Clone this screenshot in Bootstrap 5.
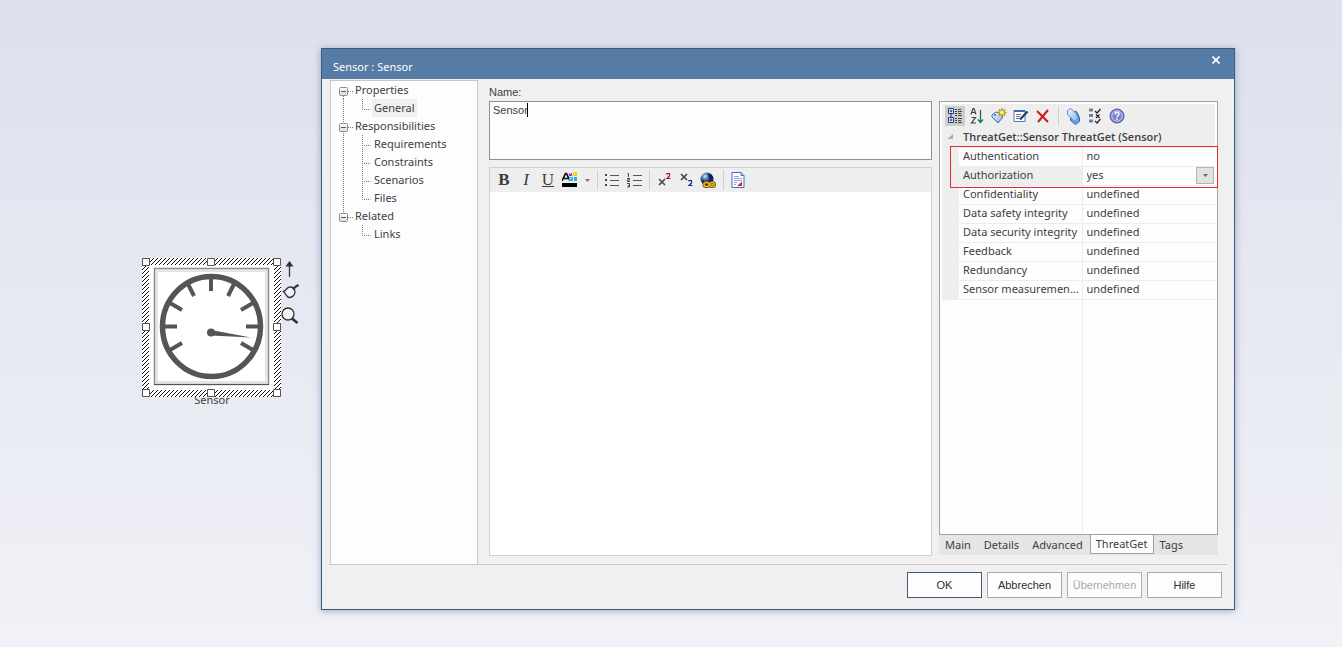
<!DOCTYPE html>
<html lang="de">
<head>
<meta charset="utf-8">
<meta name="viewport" content="width=device-width, initial-scale=1">
<title>Sensor : Sensor</title>
<link href="https://cdn.jsdelivr.net/npm/bootstrap@5.3.0/dist/css/bootstrap.min.css" rel="stylesheet">
<style>
body{min-height:100vh;padding:48px 107px 37px 142px;background:linear-gradient(#dde0ed,#f1f2f7);font:11px/18px "Noto Sans","Open Sans",sans-serif;color:#404040}
button,textarea,select{font:inherit;color:inherit}
svg{display:block;flex:none}
/* diagram element */
.element{width:179px;padding-top:210px;flex:none}
.element-name{width:140px;margin-top:-5px;line-height:16px;text-align:center}
.element svg{position:relative}
.quick{gap:6px;padding-top:3px}
/* dialog */
.dialog{border:1px solid #3c5a7f;background:#f0f0f0;box-shadow:0 1px 7px rgba(70,100,150,.5);min-width:0}
.titlebar{background:#567ca6;color:#fff;height:30px;padding:9px 10px 0 11px}
.close-x{width:16px;height:16px;margin-top:-6px}
.plain{border:0;background:none;padding:0}
.main{margin:0 7px;border-bottom:1px solid #c8c8c8;padding:1px 9px 0 0}
.tree{width:148px;margin-left:1px;margin-right:11px;border:1px solid #c8c8c8;border-bottom:0;background:#fdfdfd;flex:none}
.tree a{color:inherit;text-decoration:none;white-space:nowrap}
.tree .sub{padding:0 2px}
.tree .active{background:#f0f0f0}
.middle{margin-right:7px;min-width:0;padding:3px 0 8px}
.field-name{font-family:"Liberation Sans",Arial,sans-serif}
.name-box{height:59px;border:1px solid #909090;background:#fdfdfd;padding:0 3px;resize:none;border-radius:0;line-height:16px}
.caret{position:absolute;left:38px;top:2px;width:1px;height:14px;background:#000}
.editor{border:1px solid #d0d0d0;margin-top:7px}
.bar{background:#eeeeee;gap:2px}
.editor .bar{height:24px;padding:0 4px}
.tool{width:20px;height:20px;display:flex;align-items:center;justify-content:center}
.tool.slim{width:10px}
.tool.on{background:#cdcdcd}
.glyph{font:17px/20px "Liberation Serif",serif;color:#3c3c3c}
.sep{width:1px;height:20px;background:#d0d0d0;margin:0 2px 0 3px}
.writing{border:0;resize:none;background:#fff;outline:0}
/* property grid */
.side{width:279px;flex:none;padding:21px 0 9px}
.pane{border:1px solid #a0a0a0;background:#fdfdfd;padding:2px}
.pane .bar{height:24px;padding:0 3px}
.props{width:100%;table-layout:fixed;line-height:16px}
.props th,.props td{height:19px;padding:0 4px;border-bottom:1px solid #ececec;white-space:nowrap;font-weight:400;vertical-align:top}
.props tbody th{padding-right:0}
.props thead th{background:#eeeeee;font-family:"Open Sans","Noto Sans",sans-serif;font-weight:600;line-height:18px;border-color:#eeeeee}
.props th.gut,.props td.gut{width:17px;padding:0;background:#eeeeee;border-color:#eeeeee;vertical-align:middle}
.props td:last-child{border-left:1px solid #ececec}
.props .sel th{background:#eeeeee}
.props select{appearance:none;border:0;background:none;padding:0;outline:0;height:16px}
.drop{width:18px;height:17px;border:1px solid #b4b4b4;background:#e2e2e2;margin-right:-3px;padding:0}
.rest{margin-left:140px;border-left:1px solid #ececec}
.marker{position:absolute;left:10px;right:-1px;top:44px;height:42px;border:1px solid #e02a35;pointer-events:none}
.tabs{background:#e5e5e5;height:20px}
.tabs button{padding:0 7px 0 6px;line-height:19px;height:19px}
.tabs button.cur{background:#fdfdfd;border:1px solid #a0a0a0;border-top:0;margin-top:-1px;height:20px;padding:0 5px}
.foot{padding:7px 12px 11px;gap:5px}
.cmd{width:75px;height:26px;border:1px solid #a8a8a8;border-radius:0;background:#fdfdfd;padding:0;font:11px/18px "Liberation Sans",Arial,sans-serif;color:#303030}
.cmd.main-cmd{border-color:#3c5a7f}
.cmd:disabled{color:#aaa;border-color:#b0b0b0;opacity:1;background:#fdfdfd}
</style>
<script src="https://cdn.jsdelivr.net/npm/bootstrap@5.3.0/dist/js/bootstrap.bundle.min.js"></script>
</head>
<body class="d-flex">
<svg width="0" height="0" class="position-absolute" aria-hidden="true">
  <defs>
    <linearGradient id="box" x2="0" y2="1"><stop stop-color="#fff"/><stop offset="1" stop-color="#ddd"/></linearGradient>
    <linearGradient id="blue" x2="1" y2="1"><stop stop-color="#f4f9ff"/><stop offset="1" stop-color="#7fb0ea"/></linearGradient>
    <radialGradient id="globe" cx=".35" cy=".3"><stop stop-color="#d4e6ee"/><stop offset=".5" stop-color="#4d7c9c"/><stop offset="1" stop-color="#0a1c6c"/></radialGradient>
    <pattern id="hatch" width="4" height="4" patternUnits="userSpaceOnUse"><rect width="4" height="4" fill="#fff"/><path d="M0 3h1v1H0zM1 2h1v1H1zM2 1h1v1H2zM3 0h1v1H3z" fill="#111"/></pattern>
    <g id="node"><path d="M17 10.5h5" stroke="#777" stroke-dasharray="1 1"/><rect x="8.5" y="6.5" width="8" height="8" rx="1" fill="url(#box)" stroke="#8c8c8c"/><path d="M10 10.5h5" stroke="#3b5ba5"/></g>
    <path id="elbow" d="M31.500 0v10.500h8" fill="none" stroke="#777" stroke-dasharray="1 1"/>
    <path id="spine" d="M31.500 0v18" stroke="#777" stroke-dasharray="1 1"/>
    <path id="trunk" d="M12.500 0v18" stroke="#777" stroke-dasharray="1 1"/>
  </defs>
</svg>

<section class="element" aria-label="Sensor">
  <div class="d-flex">
    <svg width="139" height="139" viewBox="0 0 139 139">
      <rect width="139" height="139" fill="url(#hatch)"/><rect x="7" y="7" width="125" height="125" fill="#fff"/>
      <rect x="12.500" y="10.500" width="114" height="116" fill="#f2f2f2" stroke="#8d8d8d" stroke-width="1.500"/>
      <rect x="15" y="13" width="109" height="111" fill="#fff" stroke="#e4e4e4" stroke-width="2"/>
      <path d="M12 126.500h115" stroke="#555"/>
      <ellipse cx="69.500" cy="68.500" rx="49" ry="50" fill="none" stroke="#555" stroke-width="5.500"/>
      <path stroke="#555" stroke-width="4" d="M69 20v13M23 68.500h12M104 68.500h12M46 26l6 12M92 26l-6 12M28 45l12 7M111 45l-12 7M28 92l12-7M111 92l-12-7"/>
      <circle cx="69" cy="74.500" r="4" fill="#555"/><path fill="#555" d="M69 72l40 7.500-40-2z"/>
      <g fill="#fff" stroke="#555"><path d="M.5.5h7v7h-7zM65.500.5h7v7h-7zM131.500.5h7v7h-7zM.5 65.500h7v7h-7zM131.500 65.500h7v7h-7zM.5 131.500h7v7h-7zM65.500 131.500h7v7h-7zM131.500 131.500h7v7h-7z"/></g>
    </svg>
    <div class="d-flex flex-column quick">
      <svg width="18" height="17"><path d="M8.500 3v13" stroke="#333" stroke-width="1.300"/><path d="M8.500 0l4 5.500h-8z" fill="#333"/></svg>
      <svg width="18" height="16"><path d="M2.500 7.500c2.500-.5 3-4.500 6.500-4.500 3 0 5 2 5 4.500 0 3.500-2.500 6-5.500 6-3 0-3-3.500-6-6z" fill="#f1f1f3" stroke="#333" stroke-width="1.300"/><path d="M12 5.500l2-2.500L17.500 1" fill="none" stroke="#333" stroke-width="2.200"/></svg>
      <svg width="18" height="19"><circle cx="7" cy="8" r="6" fill="#f3f3f5" stroke="#333" stroke-width="1.300"/><path d="M11 12.500l5.500 4.500" stroke="#333" stroke-width="2.600"/></svg>
    </div>
  </div>
  <div class="element-name">Sensor</div>
</section>

<main class="dialog d-flex flex-column flex-grow-1">
  <header class="titlebar d-flex justify-content-between">
    <span>Sensor : Sensor</span>
    <button class="plain close-x d-flex align-items-center justify-content-center" aria-label="Schließen"><svg width="8" height="8"><path d="M.5.5l7 7M7.500.5l-7 7" stroke="#fff" stroke-width="1.600"/></svg></button>
  </header>
  <div class="main d-flex flex-grow-1">
    <nav class="tree">
      <div class="d-flex"><svg width="24" height="18"><path d="M12.500 15v3" stroke="#777" stroke-dasharray="1 1"/><use href="#node"/></svg><a href="#">Properties</a></div>
      <div class="d-flex"><svg width="41" height="18"><use href="#trunk"/><use href="#elbow"/></svg><a href="#" class="sub active">General</a></div>
      <div class="d-flex"><svg width="24" height="18"><use href="#trunk"/><use href="#node"/></svg><a href="#">Responsibilities</a></div>
      <div class="d-flex"><svg width="41" height="18"><use href="#trunk"/><use href="#spine"/><use href="#elbow"/></svg><a href="#" class="sub">Requirements</a></div>
      <div class="d-flex"><svg width="41" height="18"><use href="#trunk"/><use href="#spine"/><use href="#elbow"/></svg><a href="#" class="sub">Constraints</a></div>
      <div class="d-flex"><svg width="41" height="18"><use href="#trunk"/><use href="#spine"/><use href="#elbow"/></svg><a href="#" class="sub">Scenarios</a></div>
      <div class="d-flex"><svg width="41" height="18"><use href="#trunk"/><use href="#elbow"/></svg><a href="#" class="sub">Files</a></div>
      <div class="d-flex"><svg width="24" height="18"><path d="M12.500 0v7" stroke="#777" stroke-dasharray="1 1"/><use href="#node"/></svg><a href="#">Related</a></div>
      <div class="d-flex"><svg width="41" height="18"><use href="#elbow"/></svg><a href="#" class="sub">Links</a></div>
    </nav>

    <div class="middle d-flex flex-column flex-grow-1">
      <label for="name" class="field-name">Name:</label>
      <div class="position-relative">
        <textarea id="name" class="name-box field-name d-block w-100">Sensor</textarea>
        <span class="caret"></span>
      </div>
      <div class="editor d-flex flex-column flex-grow-1">
        <div class="bar d-flex align-items-center" role="toolbar" aria-label="Format">
          <button class="plain tool glyph fw-bold">B</button>
          <button class="plain tool glyph fst-italic">I</button>
          <button class="plain tool glyph text-decoration-underline">U</button>
          <button class="plain tool" aria-label="Textfarbe"><svg width="16" height="16"><path d="M0 9L3.500 1.500h1L8 9M2 6.500h4" fill="none" stroke="#111" stroke-width="1.700"/><path d="M7 1h3v3H7z" fill="#d020c0"/><path d="M11 0h4v4h-4z" fill="#e8d020"/><path d="M7 5h4v4H7z" fill="#20c0d8"/><path d="M12 5h3v4h-3z" fill="#38a8e8"/><path d="M8 1h1v1H8zM12 1h1v1h-1zM8 6h1v1H8z" fill="#fff"/><path d="M0 11h15v4H0z"/></svg></button>
          <button class="plain tool slim" aria-label="Farbauswahl"><svg width="5" height="3"><path d="M0 0h5L2.500 3z" fill="#777"/></svg></button>
          <span class="sep"></span>
          <button class="plain tool" aria-label="Aufzählung"><svg width="14" height="14"><path d="M5 2.500h9M5 7.500h9M5 12.500h9" stroke="#555"/><path d="M0 1h2v2H0zM0 6h2v2H0zM0 11h2v2H0z" fill="#444"/></svg></button>
          <button class="plain tool" aria-label="Nummerierung"><svg width="15" height="16"><path d="M6 3.500h9M6 8.500h9M6 13.500h9" stroke="#555"/><path d="M.5 1.500h1V5M0 6.500h2.500v1.500H.5v1.500H3M0 11.500h2.500v3.500H0M1 13.500h1.500" fill="none" stroke="#444"/></svg></button>
          <span class="sep"></span>
          <button class="plain tool" aria-label="Hochgestellt"><svg width="14" height="16"><path d="M2 7l6 6M8 7l-6 6" stroke="#444" stroke-width="1.600"/><path d="M10 3V1.500h2.500V4L10 6.500h3.500" fill="none" stroke="#a02020" stroke-width="1.200"/></svg></button>
          <button class="plain tool" aria-label="Tiefgestellt"><svg width="14" height="16"><path d="M2 2l6 6M8 2l-6 6" stroke="#444" stroke-width="1.600"/><path d="M10 9.500V8.500h2.500V11L10 13.500h3.500" fill="none" stroke="#1c2490" stroke-width="1.200"/></svg></button>
          <button class="plain tool" aria-label="Link"><svg width="16" height="17"><circle cx="7" cy="7" r="6.500" fill="url(#globe)"/><path d="M8 2l3 1 1 4-3-1zM3 8l3 2-1 2-2-2z" fill="#0a1c6c"/><g fill="none" stroke="#6a4a00" stroke-width="3"><rect x="4" y="10.500" width="5" height="4" rx="2"/><rect x="10" y="10.500" width="4.500" height="4" rx="2"/></g><g fill="none" stroke="#f0b820" stroke-width="1.500"><rect x="4" y="10.500" width="5" height="4" rx="2"/><rect x="10" y="10.500" width="4.500" height="4" rx="2"/></g></svg></button>
          <span class="sep"></span>
          <button class="plain tool" aria-label="Dokument"><svg width="14" height="16"><path d="M1 .5h9l3 3v12H1z" fill="#fff" stroke="#4a6cc0"/><path d="M10 .5v3h3" fill="#bcd" stroke="#4a6cc0"/><path d="M3 4.500h5M3 6.500h8M3 8.500h8M3 10.500h3M3 12.500h2" stroke="#8aa8dc"/><path d="M11 9.500v4.500H6z" fill="#e02020"/></svg></button>
        </div>
        <textarea class="writing flex-grow-1 w-100" aria-label="Notizen"></textarea>
      </div>
    </div>

    <div class="side d-flex flex-column">
      <div class="pane position-relative d-flex flex-column flex-grow-1">
        <div class="bar d-flex align-items-center" role="toolbar" aria-label="Eigenschaften">
          <button class="plain tool on" aria-label="Kategorien"><svg width="16" height="18"><g fill="#fff" stroke="#1c3c80"><path d="M1.500 1.500h5v5h-5zM1.500 10.500h5v5h-5z"/></g><path d="M2.500 4h3M4 2.500v3M2.500 13h3M4 11.500v3M4 7v3" stroke="#1c3c80"/><path d="M8 2.500h2M11 2.500h3M8 4.500h2M11 4.500h4M8 6.500h2M11 6.500h3M8 8.500h2M11 8.500h4M8 11.500h2M11 11.500h4M8 13.500h2M11 13.500h3M8 15.500h2M11 15.500h4" stroke="#444"/></svg></button>
          <button class="plain tool" aria-label="Alphabetisch"><svg width="14" height="18"><path d="M1 7.500L3 1.500h1L6 7.500M2 5.500h3M1.500 10.500h4L1.500 16h4.500" fill="none" stroke="#444" stroke-width="1.200"/><path d="M10.500 3v12M8 12.500l2.500 3 2.500-3" fill="none" stroke="#167848" stroke-width="1.300"/></svg></button>
          <button class="plain tool" aria-label="Neu"><svg width="16" height="16"><path d="M1 7l4-3 4 1 3 4-5 6-6-6z" fill="url(#blue)" stroke="#3f6cb4"/><circle cx="4" cy="7" r="1" fill="#3f6cb4"/><path d="M11 0v9M6.500 4.500h9M8 1.500l6 6M14 1.500l-6 6" stroke="#a89010" stroke-width="1.500"/><circle cx="11" cy="4.500" r="2.500" fill="#ffef60" stroke="#a89010" stroke-width=".6"/></svg></button>
          <button class="plain tool" aria-label="Bearbeiten"><svg width="16" height="16"><path d="M1 2.500h11v11H1z" fill="#fff" stroke="#5878b0"/><path d="M1 3h11" stroke="#4068b0" stroke-width="2"/><path d="M3 6.500h5M3 8.500h4M3 10.500h3" stroke="#777"/><path d="M14.500 3.500L7 11.500" stroke="#24426c" stroke-width="2.400"/></svg></button>
          <button class="plain tool" aria-label="Löschen"><svg width="14" height="14"><path d="M1 2l11 11M12 1L2 13" stroke="#d01810" stroke-width="2"/></svg></button>
          <span class="sep"></span>
          <button class="plain tool" aria-label="Tags"><svg width="14" height="17"><path d="M4.500 4.500l6-1 3 6v4l-4 3-5-4z" fill="#6fa2e0" stroke="#3466a8"/><path d="M1.500 2.500l3-2 5 4 3 6-4 3-7-7z" fill="url(#blue)" stroke="#5c8ccc"/></svg></button>
          <button class="plain tool" aria-label="Auswahl"><svg width="14" height="16"><path d="M1 2h4M1 7.500h4M1 13h4" stroke="#6f8296" stroke-width="3"/><path d="M7 3l2 2 3.500-4M8 6.500l3.500 3.500M11.500 6.500L8 10M7 13l2 2 3.500-4" fill="none" stroke="#222" stroke-width="1.200"/></svg></button>
          <button class="plain tool" aria-label="Hilfe"><svg width="16" height="16"><circle cx="8" cy="8" r="7" fill="#7c84d0" stroke="#5058a8"/><circle cx="8" cy="8" r="5.200" fill="none" stroke="#c8ccf0"/><path d="M6 6.500c0-3 4-3 4-.5 0 1.500-2 1.500-2 3.500M8 10.500v1.500" fill="none" stroke="#fff" stroke-width="1.400"/></svg></button>
        </div>
        <table class="props">
          <colgroup><col style="width:17px"><col style="width:123px"><col></colgroup>
          <thead><tr><th class="gut"><svg width="17" height="6"><path d="M11 0v5H5.500z" fill="#aaa"/></svg></th><th colspan="2">ThreatGet::Sensor ThreatGet (Sensor)</th></tr></thead>
          <tbody>
            <tr><td class="gut"></td><th scope="row">Authentication</th><td>no</td></tr>
            <tr class="sel"><td class="gut"></td><th scope="row"><label for="auth">Authorization</label></th><td><div class="d-flex"><select id="auth" class="flex-grow-1"><option>yes</option><option>no</option><option>undefined</option></select><button class="drop d-flex align-items-center justify-content-center" aria-label="Öffnen"><svg width="5" height="3"><path d="M0 0h5L2.500 3z" fill="#666"/></svg></button></div></td></tr>
            <tr><td class="gut"></td><th scope="row">Confidentiality</th><td>undefined</td></tr>
            <tr><td class="gut"></td><th scope="row">Data safety integrity</th><td>undefined</td></tr>
            <tr><td class="gut"></td><th scope="row">Data security integrity</th><td>undefined</td></tr>
            <tr><td class="gut"></td><th scope="row">Feedback</th><td>undefined</td></tr>
            <tr><td class="gut"></td><th scope="row">Redundancy</th><td>undefined</td></tr>
            <tr><td class="gut"></td><th scope="row">Sensor measuremen...</th><td>undefined</td></tr>
          </tbody>
        </table>
        <div class="rest flex-grow-1"></div>
        <div class="marker"></div>
      </div>
      <div class="tabs d-flex">
        <button class="plain">Main</button><button class="plain">Details</button><button class="plain">Advanced</button><button class="plain cur">ThreatGet</button><button class="plain">Tags</button>
      </div>
    </div>
  </div>
  <footer class="foot d-flex justify-content-end">
    <button class="btn cmd main-cmd">OK</button><button class="btn cmd">Abbrechen</button><button class="btn cmd" disabled>Übernehmen</button><button class="btn cmd">Hilfe</button>
  </footer>
</main>
</body>
</html>
